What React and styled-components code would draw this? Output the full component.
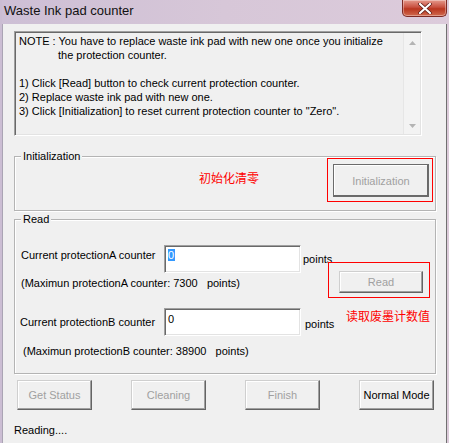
import styled, { createGlobalStyle } from 'styled-components';

const GlobalStyle = createGlobalStyle`
  html, body {
    margin: 0;
    padding: 0;
    background: #f0f0f0;
  }
  * {
    box-sizing: border-box;
  }
`;

const Window = styled.div`
  width: 449px;
  height: 443px;
  display: flex;
  flex-direction: column;
  padding: 0 2px 0 2px;
  background: linear-gradient(to right, #cbbdd3, #d6c6d6 60%, #dccbda);
  overflow: hidden;
  font-family: 'Liberation Sans', Arial, sans-serif;
  font-size: 11px;
  line-height: 14px;
  color: #000;
`;

const TitleBar = styled.div`
  height: 24px;
  display: flex;
  justify-content: space-between;
  align-items: flex-start;
  background: linear-gradient(to right, #cdbfd5, #d7c7d8 50%, #dccbdb);
`;

const Title = styled.span`
  padding: 3px 0 0 2px;
  font-size: 13px;
  line-height: 16px;
  color: #111;
`;

const CloseButton = styled.div`
  width: 45px;
  height: 17px;
  display: flex;
  align-items: center;
  justify-content: center;
  border: 1px solid #7d2a24;
  border-top: 0;
  border-radius: 0 0 5px 5px;
  background: linear-gradient(#e59a8c, #c8503f 45%, #b9361f 55%, #d06a4f);
  box-shadow: inset 0 0 0 1px rgba(255, 255, 255, 0.35);
`;

const Client = styled.div`
  flex: 1;
  padding: 7px 0 0 11px;
  background: #f0f0f0;
  border-left: 1px solid #aaa4b4;
  border-right: 1px solid #707070;
`;

const NoteBox = styled.div`
  width: 408px;
  height: 105px;
  display: flex;
  border: 1px solid;
  border-color: #a0a0a0 #ffffff #ffffff #a0a0a0;
  box-shadow: inset 1px 1px 0 #696969, inset -1px -1px 0 #e3e3e3;
  padding: 1px;
`;

const NoteText = styled.div`
  flex: 1;
  padding: 1px 4px 0 3px;
`;

const NoteLine = styled.div`
  height: 14px;
  white-space: nowrap;
  padding-left: ${(p) => p.$indent || 0}px;
`;

const ScrollBar = styled.div`
  width: 17px;
  display: flex;
  flex-direction: column;
  justify-content: space-between;
  align-items: center;
  padding: 8px 0 6px;
  background: #f3f3f3;
  border-left: 1px solid #e6e6e6;
`;

const Group = styled.div`
  position: relative;
  width: 422px;
  height: ${(p) => p.$height}px;
  margin-top: ${(p) => p.$top}px;
  border: 1px solid #b4b4b4;
  box-shadow: inset 1px 1px 0 #fff, 1px 1px 0 #fff;
`;

const GroupLabel = styled.span`
  position: absolute;
  top: -8px;
  left: 6px;
  padding: 0 2px 0 2px;
  background: #f0f0f0;
`;

const InitRow = styled.div`
  display: flex;
  align-items: center;
  padding: 1px 2px 0 0;
`;

const Hint = styled.span`
  font-family: 'Noto Sans CJK SC', 'Liberation Sans', sans-serif;
  font-size: 12px;
  line-height: 14px;
  color: #ff0000;
  white-space: nowrap;
  margin-left: ${(p) => p.$left}px;
  margin-top: ${(p) => p.$top || 0}px;
  margin-bottom: ${(p) => p.$bottom || 0}px;
`;

const RedFrame = styled.div`
  display: flex;
  border: 1px solid #f00;
  padding: ${(p) => p.$pad};
  margin-left: ${(p) => (p.$auto ? 'auto' : '0')};
`;

const Button = styled.div`
  width: ${(p) => p.$w}px;
  height: ${(p) => p.$h}px;
  display: flex;
  align-items: center;
  justify-content: center;
  background: #f0f0f0;
  border: 1px solid;
  border-color: ${(p) =>
    p.$default ? '#6b6b6b' : '#cfcfcf #646464 #646464 #cfcfcf'};
  box-shadow: inset -1px -1px 0 ${(p) => (p.$default ? '#696969' : '#a0a0a0')},
    inset 1px 1px 0 #ffffff;
  color: ${(p) => (p.$disabled ? '#a0a0a0' : '#000')};
  white-space: nowrap;
`;

const ReadBody = styled.div`
  display: flex;
`;

const LeftCol = styled.div`
  width: 313px;
  padding-top: 25px;
  display: flex;
  flex-direction: column;
`;

const RightCol = styled.div`
  padding-top: 42px;
  display: flex;
  flex-direction: column;
`;

const CounterRow = styled.div`
  display: grid;
  grid-template-columns: 149px 137px auto;
  align-items: start;
  margin-top: ${(p) => p.$top || 0}px;
`;

const CounterLabel = styled.span`
  padding-left: ${(p) => p.$indent}px;
  margin-top: ${(p) => p.$top}px;
  white-space: nowrap;
`;

const Field = styled.div`
  height: 28px;
  background: #fff;
  border: 1px solid;
  border-color: #a0a0a0 #ffffff #ffffff #a0a0a0;
  box-shadow: inset 1px 1px 0 #696969, inset -1px -1px 0 #e3e3e3;
  padding: 1px 0 0 3px;
  line-height: 15px;
`;

const Selected = styled.span`
  background: #3399ff;
  color: #fff;
  padding: 0 1px 0 0;
`;

const Value = styled.span`
  display: inline-block;
  padding-top: ${(p) => p.$top || 0}px;
`;

const Unit = styled.span`
  margin-left: ${(p) => p.$left}px;
  margin-top: ${(p) => p.$top}px;
  white-space: nowrap;
`;

const MaxNote = styled.div`
  padding-left: ${(p) => p.$indent}px;
  margin-top: ${(p) => p.$top}px;
  white-space: pre;
`;

const ButtonRow = styled.div`
  display: flex;
  gap: 39px;
  margin: 6px 0 0 3px;
`;

const Status = styled.div`
  margin-top: 13px;
`;

const Arrow = ({ down }) => (
  <svg width="7" height="4" viewBox="0 0 7 4">
    <path d={down ? 'M0 0 H7 L3.5 4 Z' : 'M3.5 0 L7 4 H0 Z'} fill="#b4b4b4" />
  </svg>
);

export default function App() {
  return (
    <>
      <GlobalStyle />
      <Window>
        <TitleBar>
          <Title>Waste Ink pad counter</Title>
          <CloseButton>
            <svg width="14" height="11" viewBox="0 0 14 11">
              <path
                d="M2 1 L12 10 M12 1 L2 10"
                stroke="#5a1a14"
                strokeWidth="3.6"
                strokeLinecap="round"
              />
              <path
                d="M2 1 L12 10 M12 1 L2 10"
                stroke="#fff"
                strokeWidth="2.2"
                strokeLinecap="round"
              />
            </svg>
          </CloseButton>
        </TitleBar>
        <Client>
          <NoteBox>
            <NoteText>
              <NoteLine>
                NOTE : You have to replace waste ink pad with new one once you initialize
              </NoteLine>
              <NoteLine $indent={39}>the protection counter.</NoteLine>
              <NoteLine />
              <NoteLine>1) Click [Read] button to check current protection counter.</NoteLine>
              <NoteLine>2) Replace waste ink pad with new one.</NoteLine>
              <NoteLine>
                3) Click [Initialization] to reset current protection counter to "Zero".
              </NoteLine>
            </NoteText>
            <ScrollBar>
              <Arrow />
              <Arrow down />
            </ScrollBar>
          </NoteBox>

          <Group $top={20} $height={55}>
            <GroupLabel>Initialization</GroupLabel>
            <InitRow>
              <Hint $left={184} $bottom={4}>
                初始化清零
              </Hint>
              <RedFrame $auto $pad="5px 3px 4px 5px">
                <Button $w={96} $h={33} $default $disabled>
                  Initialization
                </Button>
              </RedFrame>
            </InitRow>
          </Group>

          <Group $top={8} $height={155}>
            <GroupLabel>Read</GroupLabel>
            <ReadBody>
              <LeftCol>
                <CounterRow>
                  <CounterLabel $indent={6} $top={3}>
                    Current protectionA counter
                  </CounterLabel>
                  <Field>
                    <Value $top={1}>
                      <Selected>0</Selected>
                    </Value>
                  </Field>
                  <Unit $left={2} $top={7}>
                    points
                  </Unit>
                </CounterRow>
                <MaxNote $indent={6} $top={3}>
                  {'(Maximun protectionA counter: 7300   points)'}
                </MaxNote>
                <CounterRow $top={18}>
                  <CounterLabel $indent={5} $top={7}>
                    Current protectionB counter
                  </CounterLabel>
                  <Field>
                    <Value $top={2}>0</Value>
                  </Field>
                  <Unit $left={4} $top={9}>
                    points
                  </Unit>
                </CounterRow>
                <MaxNote $indent={8} $top={8}>
                  {'(Maximun protectionB counter: 38900   points)'}
                </MaxNote>
              </LeftCol>
              <RightCol>
                <RedFrame $pad="8px 6px 4px 10px">
                  <Button $w={84} $h={22} $disabled>
                    Read
                  </Button>
                </RedFrame>
                <Hint $left={18} $top={11}>
                  读取废墨计数值
                </Hint>
              </RightCol>
            </ReadBody>
          </Group>

          <ButtonRow>
            <Button $w={75} $h={30} $disabled>
              Get Status
            </Button>
            <Button $w={75} $h={30} $disabled>
              Cleaning
            </Button>
            <Button $w={75} $h={30} $disabled>
              Finish
            </Button>
            <Button $w={75} $h={30}>
              Normal Mode
            </Button>
          </ButtonRow>
          <Status>Reading....</Status>
        </Client>
      </Window>
    </>
  );
}
